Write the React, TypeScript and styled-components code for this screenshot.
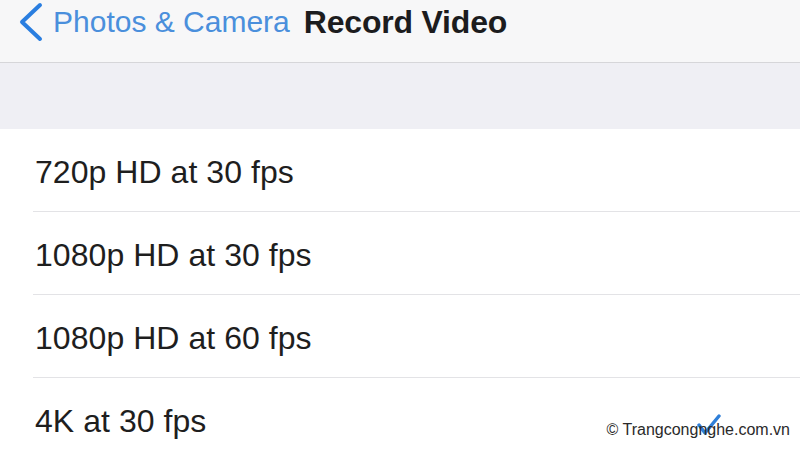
import React from "react";
import styled, { createGlobalStyle } from "styled-components";

const GlobalStyle = createGlobalStyle`
  html, body {
    margin: 0;
    padding: 0;
    background: #ffffff;
  }
  body {
    font-family: "Liberation Sans", Arial, sans-serif;
    overflow: hidden;
  }
`;

const Screen = styled.div`
  position: relative;
  width: 800px;
  height: 449px;
  overflow: hidden;
  background: #ffffff;
`;

const NavBar = styled.div`
  display: flex;
  align-items: center;
  height: 44px;
  padding: 0 0 18px 18px;
  background: #f7f7f8;
  border-bottom: 1px solid #d6d6d9;
`;

const BackButton = styled.div`
  display: flex;
  align-items: center;
  gap: 9px;
  color: #4a8fdc;
  font-size: 30px;
`;

const Title = styled.div`
  margin-left: 14px;
  font-size: 32px;
  font-weight: 700;
  letter-spacing: -0.2px;
  color: #1c1c1e;
`;

const GroupGap = styled.div`
  height: 66px;
  background: #efeff4;
`;

const List = styled.div`
  display: flex;
  flex-direction: column;
  background: #ffffff;
`;

const Row = styled.div`
  display: flex;
  align-items: center;
  justify-content: space-between;
  height: 83px;
  margin-left: 33px;
  padding: 4px 78px 0 2px;
  box-sizing: border-box;
  font-size: 32px;
  letter-spacing: 0.05px;
  color: #1e1e1e;
  border-bottom: 1px solid #e3e3e6;
  &:last-child {
    border-bottom: none;
  }
`;

const Watermark = styled.div`
  position: absolute;
  right: 10px;
  bottom: 10px;
  font-size: 16px;
  color: #2a2a2a;
`;

const Check = () => (
  <svg width="26" height="22" viewBox="0 0 26 22" style={{ marginTop: 6 }}>
    <path
      d="M3 11 L9 19 L23 2"
      fill="none"
      stroke="#2f7fd8"
      strokeWidth="3.4"
      strokeLinecap="round"
      strokeLinejoin="round"
    />
  </svg>
);

const Chevron = () => (
  <svg width="26" height="40" viewBox="0 0 26 40">
    <path
      d="M22 3 L4 20 L22 37"
      fill="none"
      stroke="#2a7ee0"
      strokeWidth="4"
      strokeLinecap="round"
      strokeLinejoin="round"
    />
  </svg>
);

const options = [
  { label: "720p HD at 30 fps", selected: false },
  { label: "1080p HD at 30 fps", selected: false },
  { label: "1080p HD at 60 fps", selected: false },
  { label: "4K at 30 fps", selected: true },
];

export default function App() {
  return (
    <>
      <GlobalStyle />
      <Screen>
        <NavBar>
          <BackButton>
            <Chevron />
            <span>Photos &amp; Camera</span>
          </BackButton>
          <Title>Record Video</Title>
        </NavBar>
        <GroupGap />
        <List>
          {options.map((o) => (
            <Row key={o.label}>
              <span>{o.label}</span>
              {o.selected && <Check />}
            </Row>
          ))}
        </List>
        <Watermark>© Trangcongnghe.com.vn</Watermark>
      </Screen>
    </>
  );
}
